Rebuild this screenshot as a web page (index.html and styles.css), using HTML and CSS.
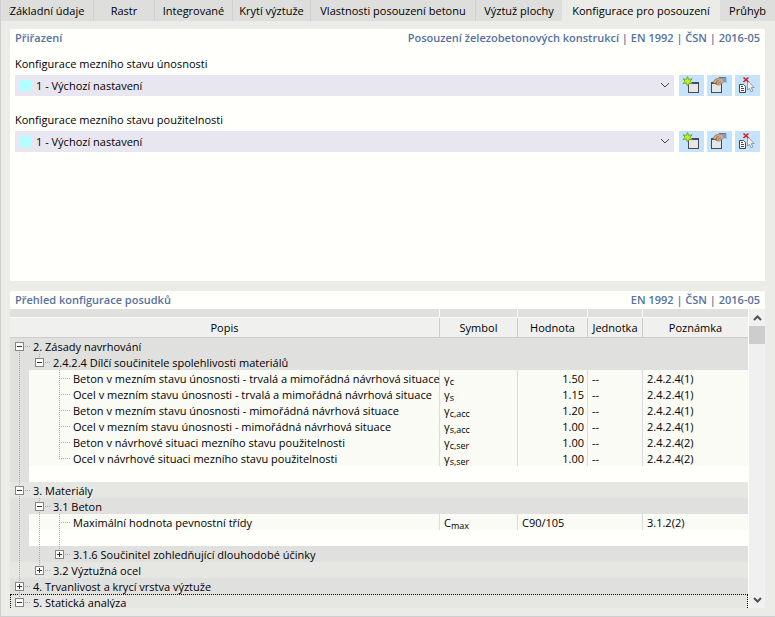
FILE: index.html
```html
<!DOCTYPE html>
<html lang="cs">

<head>
    <meta charset="UTF-8">
    <title>Konfigurace pro posouzení</title>
    <link rel="stylesheet" href="styles.css">
</head>

<body>

    <svg class="sprite" width="0" height="0">
        <symbol id="icon-new" viewBox="0 0 25 21">
            <rect x="9.500" y="8.500" width="10" height="9" fill="#e6e6e9" stroke="#4a4a4a" />
            <path d="M9 7.500h11" stroke="#4a4a4a" />
            <path d="M10 8.500h9" stroke="#3c3cc8" />
            <path d="M8.500 1.500l1.200 3 3.300-.8-1.700 2.500 2 2.600-3.200-.4-1.600 2.600-1.100-3-3.400.5 2-2.400-2-2.300 3.300.6z" fill="#c8f000" stroke="#5f9a40" stroke-width=".8" />
        </symbol>
        <symbol id="icon-edit" viewBox="0 0 25 21">
            <rect x="4.500" y="8.500" width="10" height="9" fill="#e6e6e9" stroke="#4a4a4a" />
            <path d="M4 8h11" stroke="#4a4a4a" stroke-width="2" />
            <path d="M6 7.500l2-3L12 3l4 .5 1 3-3 2.500-2 1-3-.5 1-2-2.500 1z" fill="#d8ab86" stroke="#8a6650" stroke-width=".7" />
            <path d="M9 6.500l3-1M11 8.500l3-2" stroke="#8a6650" stroke-width=".7" />
            <path d="M16 3h3.500v5L17 7z" fill="#6f9fe0" />
            <path d="M12 2.500h7" stroke="#6b7787" />
        </symbol>
        <symbol id="icon-unset" viewBox="0 0 25 21">
            <path d="M4.500 9.500h4l2 2v6h-6z" fill="#fff" stroke="#4a4a4a" />
            <path d="M6 11.500h2M6 13.500h3M6 15.500h3" stroke="#4a4a4a" />
            <path d="M12.500 5.500v9.500l2-1.800 1.500 3.600 1.800-.8-1.500-3.500h2.900z" fill="#f4f4f6" stroke="#8a9098" stroke-width=".9" />
            <path d="M8.500 2.500l5 4.500M13.500 2.500L8.500 7" stroke="#e01818" stroke-width="1.500" />
        </symbol>
    </svg>

    <nav class="tabs">
        <button type="button" class="tab">Základní údaje</button>
        <button type="button" class="tab">Rastr</button>
        <button type="button" class="tab">Integrované</button>
        <button type="button" class="tab">Krytí výztuže</button>
        <button type="button" class="tab">Vlastnosti posouzení betonu</button>
        <button type="button" class="tab">Výztuž plochy</button>
        <button type="button" class="tab active">Konfigurace pro posouzení</button>
        <button type="button" class="tab">Průhyb</button>
    </nav>

    <main>
        <section class="panel assignment">
            <header class="panel-title">
                <h2>Přiřazení</h2>
                <span>Posouzení železobetonových konstrukcí | EN 1992 | ČSN | 2016-05</span>
            </header>

            <div class="field">
                <label for="uls">Konfigurace mezního stavu únosnosti</label>
                <div class="controls">
                    <div class="combo">
                        <select id="uls">
                            <option>1 - Výchozí nastavení</option>
                        </select>
                        <svg class="chevron" width="10" height="6"><path d="M1 1l4 4 4-4" /></svg>
                    </div>
                    <div class="tools">
                        <button type="button" aria-label="Nová"><svg><use href="#icon-new" /></svg></button>
                        <button type="button" aria-label="Upravit"><svg><use href="#icon-edit" /></svg></button>
                        <button type="button" aria-label="Zrušit"><svg><use href="#icon-unset" /></svg></button>
                    </div>
                </div>
            </div>

            <div class="field">
                <label for="sls">Konfigurace mezního stavu použitelnosti</label>
                <div class="controls">
                    <div class="combo">
                        <select id="sls">
                            <option>1 - Výchozí nastavení</option>
                        </select>
                        <svg class="chevron" width="10" height="6"><path d="M1 1l4 4 4-4" /></svg>
                    </div>
                    <div class="tools">
                        <button type="button" aria-label="Nová"><svg><use href="#icon-new" /></svg></button>
                        <button type="button" aria-label="Upravit"><svg><use href="#icon-edit" /></svg></button>
                        <button type="button" aria-label="Zrušit"><svg><use href="#icon-unset" /></svg></button>
                    </div>
                </div>
            </div>
        </section>

        <section class="panel overview">
            <header class="panel-title">
                <h2>Přehled konfigurace posudků</h2>
                <span>EN 1992 | ČSN | 2016-05</span>
            </header>

            <div class="grid">
                <div class="grid-view">
                    <table>
                        <colgroup>
                            <col>
                            <col class="col-symbol">
                            <col class="col-value">
                            <col class="col-unit">
                            <col class="col-note">
                        </colgroup>
                        <thead>
                            <tr class="strip"><td></td><td></td><td></td><td></td><td></td></tr>
                            <tr>
                                <th>Popis</th>
                                <th>Symbol</th>
                                <th>Hodnota</th>
                                <th>Jednotka</th>
                                <th>Poznámka</th>
                            </tr>
                        </thead>
                        <tbody>
                            <tr class="group">
                                <td colspan="5"><div class="node"><i class="g stub down"><button type="button" class="toggle" aria-label="Sbalit"></button></i><span>2. Zásady navrhování</span></div></td>
                            </tr>
                            <tr class="group">
                                <td colspan="5"><div class="node"><i class="g line"></i><i class="g stub up"><button type="button" class="toggle" aria-label="Sbalit"></button></i><span>2.4.2.4 Dílčí součinitele spolehlivosti materiálů</span></div></td>
                            </tr>
                            <tr class="item">
                                <td><div class="node"><i class="g line"></i><i class="g"></i><i class="g stub line"></i><span>Beton v mezním stavu únosnosti - trvalá a mimořádná návrhová situace</span></div></td>
                                <td>γ<sub>c</sub></td>
                                <td class="num">1.50</td>
                                <td>--</td>
                                <td>2.4.2.4(1)</td>
                            </tr>
                            <tr class="item">
                                <td><div class="node"><i class="g line"></i><i class="g"></i><i class="g stub line"></i><span>Ocel v mezním stavu únosnosti - trvalá a mimořádná návrhová situace</span></div></td>
                                <td>γ<sub>s</sub></td>
                                <td class="num">1.15</td>
                                <td>--</td>
                                <td>2.4.2.4(1)</td>
                            </tr>
                            <tr class="item">
                                <td><div class="node"><i class="g line"></i><i class="g"></i><i class="g stub line"></i><span>Beton v mezním stavu únosnosti - mimořádná návrhová situace</span></div></td>
                                <td>γ<sub>c,acc</sub></td>
                                <td class="num">1.20</td>
                                <td>--</td>
                                <td>2.4.2.4(1)</td>
                            </tr>
                            <tr class="item">
                                <td><div class="node"><i class="g line"></i><i class="g"></i><i class="g stub line"></i><span>Ocel v mezním stavu únosnosti - mimořádná návrhová situace</span></div></td>
                                <td>γ<sub>s,acc</sub></td>
                                <td class="num">1.00</td>
                                <td>--</td>
                                <td>2.4.2.4(1)</td>
                            </tr>
                            <tr class="item">
                                <td><div class="node"><i class="g line"></i><i class="g"></i><i class="g stub line"></i><span>Beton v návrhové situaci mezního stavu použitelnosti</span></div></td>
                                <td>γ<sub>c,ser</sub></td>
                                <td class="num">1.00</td>
                                <td>--</td>
                                <td>2.4.2.4(2)</td>
                            </tr>
                            <tr class="item">
                                <td><div class="node"><i class="g line"></i><i class="g"></i><i class="g stub up"></i><span>Ocel v návrhové situaci mezního stavu použitelnosti</span></div></td>
                                <td>γ<sub>s,ser</sub></td>
                                <td class="num">1.00</td>
                                <td>--</td>
                                <td>2.4.2.4(2)</td>
                            </tr>
                            <tr class="blank">
                                <td colspan="5"><div class="node"><i class="g line"></i></div></td>
                            </tr>
                            <tr class="group light">
                                <td colspan="5"><div class="node"><i class="g stub line"><button type="button" class="toggle" aria-label="Sbalit"></button></i><span>3. Materiály</span></div></td>
                            </tr>
                            <tr class="group">
                                <td colspan="5"><div class="node"><i class="g line"></i><i class="g stub line"><button type="button" class="toggle" aria-label="Sbalit"></button></i><span>3.1 Beton</span></div></td>
                            </tr>
                            <tr class="item">
                                <td><div class="node"><i class="g line"></i><i class="g line"></i><i class="g stub line"></i><span>Maximální hodnota pevnostní třídy</span></div></td>
                                <td>C<sub>max</sub></td>
                                <td colspan="2">C90/105</td>
                                <td>3.1.2(2)</td>
                            </tr>
                            <tr class="blank">
                                <td colspan="5"><div class="node"><i class="g line"></i><i class="g line"></i><i class="g line"></i></div></td>
                            </tr>
                            <tr class="group">
                                <td colspan="5"><div class="node"><i class="g line"></i><i class="g line"></i><i class="g stub up"><button type="button" class="toggle closed" aria-label="Rozbalit"></button></i><span>3.1.6 Součinitel zohledňující dlouhodobé účinky</span></div></td>
                            </tr>
                            <tr class="group light">
                                <td colspan="5"><div class="node"><i class="g line"></i><i class="g stub up"><button type="button" class="toggle closed" aria-label="Rozbalit"></button></i><span>3.2 Výztužná ocel</span></div></td>
                            </tr>
                            <tr class="group">
                                <td colspan="5"><div class="node"><i class="g stub line"><button type="button" class="toggle closed" aria-label="Rozbalit"></button></i><span>4. Trvanlivost a krycí vrstva výztuže</span></div></td>
                            </tr>
                            <tr class="group light current">
                                <td colspan="5"><div class="node"><i class="g stub line"><button type="button" class="toggle" aria-label="Sbalit"></button></i><span>5. Statická analýza</span></div></td>
                            </tr>
                        </tbody>
                    </table>
                </div>
                <div class="scrollbar">
                    <button type="button" aria-label="Nahoru"><svg width="9" height="6"><path d="M1 5l3.500-3.500L8 5" /></svg></button>
                    <div class="thumb"></div>
                    <button type="button" class="down" aria-label="Dolů"><svg width="9" height="6"><path d="M1 1l3.500 3.500L8 1" /></svg></button>
                </div>
            </div>
        </section>
    </main>

</body>

</html>
```
FILE: styles.css
```css
* {
    box-sizing: border-box;
}

body {
    margin: 0;
    height: 100vh;
    display: flex;
    flex-direction: column;
    overflow: hidden;
    background: #ebece8;
    border-left: 1px solid #cfcfd0;
    border-bottom: 1px solid #cfcfd0;
    color: #000;
    font-family: "Open Sans", "Noto Sans", sans-serif;
    font-size: 11px;
    line-height: 16px;
}

button,
select {
    font: inherit;
    color: inherit;
    border: none;
    padding: 0;
    margin: 0;
}

.sprite {
    position: absolute;
}

/* tabs */
.tabs {
    display: grid;
    grid-template-columns: 93px 61px 78px 78px 165px 86px 158px 1fr;
    flex: none;
    height: 21px;
    overflow: hidden;
}

.tab {
    background: #dededd;
    border-right: 1px solid #cfcfcf;
    white-space: nowrap;
}

.tab.active {
    background: #ebece8;
}

.tab.active,
.tab:last-child,
.tab:nth-child(6) {
    border-right: none;
}

/* panels */
main {
    flex: 1;
    min-height: 0;
    display: flex;
    flex-direction: column;
    gap: 10px;
    padding: 8px 10px 8px 9px;
}

.panel {
    background: #fffffc;
}

.panel-title {
    display: flex;
    justify-content: space-between;
    height: 18px;
    line-height: 18px;
    padding: 0 5px;
    color: #5672a0;
    font-weight: 600;
}

.panel-title h2 {
    margin: 0;
    font-size: 11px;
    font-weight: 600;
}

.assignment {
    flex: none;
    min-height: 252px;
}

.field {
    padding: 9px 5px 10px;
}

.field label {
    display: block;
    margin-bottom: 3px;
}

.field + .field {
    padding-top: 6px;
}

.controls {
    display: flex;
    gap: 5px;
}

.combo {
    flex: 1;
    position: relative;
}

.combo::before {
    content: "";
    position: absolute;
    left: 5px;
    top: 5px;
    width: 11px;
    height: 11px;
    background: #b3ffff;
}

.combo select {
    display: block;
    width: 100%;
    height: 21px;
    padding-left: 21px;
    appearance: none;
    background: #e8e7f1;
    border-radius: 0;
}

.chevron {
    position: absolute;
    right: 4px;
    top: 7px;
    fill: none;
    stroke: #444;
    pointer-events: none;
}

.tools {
    display: flex;
    gap: 3px;
}

.tools button {
    width: 25px;
    height: 21px;
    background: #c5e3fa;
}

.tools svg {
    display: block;
    width: 25px;
    height: 21px;
}

/* overview table */
.overview {
    flex: 1;
    min-height: 0;
    display: flex;
    flex-direction: column;
}

.grid {
    flex: 1;
    min-height: 0;
    display: flex;
    gap: 1px;
}

.grid-view {
    flex: 1;
    overflow: hidden;
}

table {
    width: 100%;
    table-layout: fixed;
    border-collapse: separate;
    border-spacing: 0;
}

.col-symbol {
    width: 78px;
}

.col-value {
    width: 70px;
}

.col-unit {
    width: 55px;
}

.col-note {
    width: 106px;
}

td,
th {
    height: 16px;
    padding: 0 4px;
    white-space: nowrap;
}

.strip td {
    height: 9px;
    background: #e0e0df;
    border-bottom: 1px solid #fafafa;
}

.strip td + td {
    border-left: 1px solid #fafafa;
}

th {
    height: 20px;
    padding: 0;
    background: #f0f0ef;
    border-bottom: 1px solid #cdcdcd;
    font-weight: normal;
}

th + th {
    border-left: 1px solid #cdcdcd;
}

tbody td:first-child {
    padding: 0;
}

.group td {
    background: #e0e0df;
}

.group.light td {
    background: #e6e7e3;
}

.item td {
    background: #fafbf5;
}

.item td + td {
    padding-top: 2px;
    border-left: 1px solid #dcdcdc;
    line-height: 14px;
}

.item td:first-child {
    background: linear-gradient(to right, #e0e0df 19px, #fafbf5 19px);
}

.blank td:first-child {
    background: linear-gradient(to right, #e0e0df 19px, #fffffc 19px);
}

.current {
    outline: 1px dotted #000;
    outline-offset: -1px;
}

.item .num {
    text-align: right;
    padding-right: 3px;
}

sub {
    font-size: 9px;
    line-height: 1px;
    vertical-align: -2px;
}

/* tree guides */
.node {
    display: flex;
    height: 16px;
}

.node span {
    padding-left: 3px;
    line-height: 18px;
}

.g {
    position: relative;
    flex: none;
    width: 20px;
    height: 16px;
}

.line::before,
.up::before,
.down::before {
    content: "";
    position: absolute;
    left: 9px;
    top: 0;
    width: 1px;
    height: 16px;
    background: repeating-linear-gradient(to bottom, #a8a8a8 0 1px, transparent 1px 2px);
}

.up::before {
    height: 9px;
}

.down::before {
    top: 8px;
    height: 8px;
}

.stub::after {
    content: "";
    position: absolute;
    left: 9px;
    top: 8px;
    width: 11px;
    height: 1px;
    background: repeating-linear-gradient(to right, #a8a8a8 0 1px, transparent 1px 2px);
}

.toggle {
    position: absolute;
    z-index: 1;
    left: 5px;
    top: 4px;
    width: 9px;
    height: 9px;
    border: 1px solid #858585;
    background: linear-gradient(#333, #333) center / 5px 1px no-repeat #fff;
}

.toggle.closed {
    background:
        linear-gradient(#333, #333) center / 5px 1px no-repeat,
        linear-gradient(#333, #333) center / 1px 5px no-repeat #fff;
}

/* scrollbar */
.scrollbar {
    width: 16px;
    display: flex;
    flex-direction: column;
    background: #f0f0f0;
}

.scrollbar button {
    display: flex;
    align-items: center;
    justify-content: center;
    height: 17px;
    background: none;
}

.scrollbar .down {
    margin-top: auto;
}

.scrollbar svg {
    fill: none;
    stroke: #505050;
    stroke-width: 2;
}

.thumb {
    height: 18px;
    background: #cdcdcd;
}
```
